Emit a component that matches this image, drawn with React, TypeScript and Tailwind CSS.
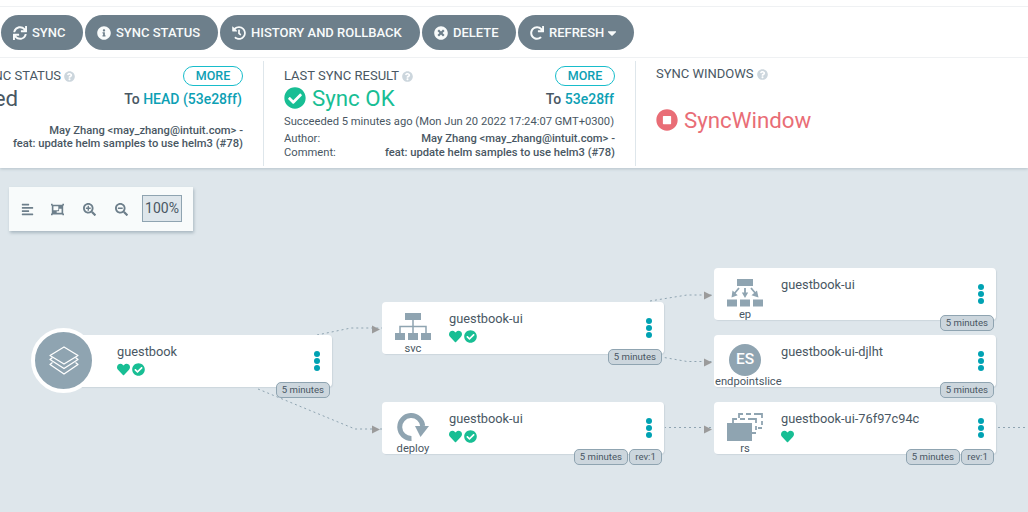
import type { ReactNode } from "react";
import {
  FaAlignLeft,
  FaCaretDown,
  FaCheckCircle,
  FaHeart,
  FaHistory,
  FaInfoCircle,
  FaObjectGroup,
  FaQuestionCircle,
  FaRedo,
  FaSearchMinus,
  FaSearchPlus,
  FaStopCircle,
  FaSync,
  FaTimesCircle,
} from "react-icons/fa";

function ActionButton({ icon, label, width, caret }: { icon: ReactNode; label: string; width: string; caret?: boolean }) {
  return (
    <button
      className={`flex h-[35px] shrink-0 items-center rounded-full bg-[#6d7f8b] pl-[12px] text-[13px] leading-[35px] font-medium whitespace-nowrap text-[#f8fbfb] ${width}`}
    >
      <span className="mr-[5px] text-[14px]">{icon}</span>
      {label}
      {caret && <FaCaretDown className="ml-[1px] text-[14px]" />}
    </button>
  );
}

function PanelTitle({ children }: { children: ReactNode }) {
  return (
    <div className="flex items-center text-[13px] leading-[20px] whitespace-nowrap">
      {children}
      <FaQuestionCircle className="ml-[3px] text-[11px] text-[#ccd6dd]" />
    </div>
  );
}

function MoreButton() {
  return (
    <button className="flex h-5 w-[60px] items-center justify-center rounded-full border border-[#18bdcb] text-[12.5px] font-medium text-[#0da0b4]">
      MORE
    </button>
  );
}

function Revision({ value }: { value: string }) {
  return (
    <div className="mr-px text-[14px] leading-[20px] font-medium whitespace-nowrap">
      To <span className="text-[#0da0b4]">{value}</span>
    </div>
  );
}

function SitemapIcon() {
  return (
    <svg width="36" height="28" viewBox="0 0 36 28" fill="#8fa4b1">
      <path d="M10 0h16v7H10zM0 20h10v7H0zM13 20h10v7H13zM26 20h10v7H26z" />
      <path d="M5 20v-6.5h26V20M18 7v13" fill="none" stroke="#8fa4b1" strokeWidth="1.5" />
    </svg>
  );
}

function EndpointIcon() {
  return (
    <svg width="36" height="28" viewBox="0 0 36 28" fill="#8fa4b1">
      <path d="M10 0h16v7H10zM0 20.5h10v7H0zM13 20.5h10v7H13zM26 20.5h10v7H26z" />
      <path d="M12 9l-5 6M18 9v6M24 9l5 6" fill="none" stroke="#8fa4b1" strokeWidth="1.8" />
      <path d="M4.5 18.5l1-7 5.2 4.8zM14.8 13.5h6.4L18 19zM31.5 18.5l-7-2.2 5.5-4.8z" />
    </svg>
  );
}

function DeployIcon() {
  return (
    <svg width="36" height="28" viewBox="0 0 36 28">
      <path d="M16.500 25.5A11.5 11.5 0 1 1 27.7 13" fill="none" stroke="#8fa4b1" strokeWidth="5" />
      <path d="M20 13h14l-8.5 11z" fill="#8fa4b1" />
    </svg>
  );
}

function ReplicaIcon() {
  return (
    <svg width="36" height="28" viewBox="0 0 36 28" fill="none" stroke="#8fa4b1" strokeWidth="1.8">
      <path d="M12 5V1h4M19 1h5M27 1h8v4M35 8v4M35 15h-4M6 10V6h4M13 6h5M21 6h8v4M29 13v4M29 20h-4" />
      <path d="M0 10h25v18H0z" fill="#8fa4b1" stroke="none" />
    </svg>
  );
}

function SliceIcon() {
  return (
    <div className="flex size-8 items-center justify-center rounded-full bg-[#8fa4b1] text-[15.5px] font-medium text-white">
      ES
    </div>
  );
}

function Badge({ children }: { children: ReactNode }) {
  return (
    <span className="flex h-4 min-w-[33px] items-center justify-center rounded-[5px] border border-[#8fa4b1] bg-[#ccd6dd] px-[5px] text-[9.6px] leading-[14px] whitespace-nowrap text-[#495763]">
      {children}
    </span>
  );
}

type NodeProps = {
  place: string;
  name: string;
  kind?: string;
  icon?: ReactNode;
  healthy?: boolean;
  synced?: boolean;
  rev?: boolean;
  root?: boolean;
};

function ResourceNode({ place, name, kind, icon, healthy, synced, rev, root }: NodeProps) {
  return (
    <div className={`absolute flex h-[52px] w-[282px] rounded-[4px] bg-white shadow-[1px_1px_1px_#ccd6dd] ${place}`}>
      <div className="flex w-[67px] shrink-0">
        {root ? (
          <div className="-mt-[7px] -ml-[19px] flex size-[65px] shrink-0 items-center justify-center rounded-full border-4 border-white bg-[#8fa4b1]">
            <svg width="30" height="29" viewBox="0 0 30 29" fill="none" stroke="white" strokeWidth="1.3" strokeLinejoin="round">
              <path d="M15 1l14 8.5L15 18 1 9.500z" />
              <path d="M3.500 11.500L1 13.500 15 22.500l14-9-2.500-2M3.500 16.500L1 18.500 15 28l14-9.500-2.500-2" />
            </svg>
          </div>
        ) : (
          <div className="ml-px w-[60px] shrink-0 pt-[9px]">
            <div className="flex h-[32px] items-center justify-center">{icon}</div>
            <div className="text-center text-[11.2px] leading-[12px] whitespace-nowrap">{kind}</div>
          </div>
        )}
      </div>
      <div className="flex flex-col pt-[8px]">
        <div className="text-[12.8px] leading-[18px] whitespace-nowrap">{name}</div>
        <div className="mt-[2px] flex gap-[2px] text-[13px] text-[#18be94]">
          {healthy && <FaHeart />}
          {synced && <FaCheckCircle />}
        </div>
      </div>
      <svg className="mt-[16px] mr-[12px] ml-auto" width="6" height="20" viewBox="0 0 6 20" fill="#00a2b3">
        <circle cx="3" cy="3" r="3" />
        <circle cx="3" cy="10" r="3" />
        <circle cx="3" cy="17" r="3" />
      </svg>
      <div className="absolute right-[2px] -bottom-[11px] flex gap-[1px]">
        <Badge>5 minutes</Badge>
        {rev && <Badge>rev:1</Badge>}
      </div>
    </div>
  );
}

export default function App() {
  return (
    <div className="flex h-[512px] w-[1028px] flex-col overflow-hidden bg-[#dee6eb] font-[Roboto,sans-serif] text-[#495763]">
      <header className="relative z-10 shrink-0 bg-white pt-[6px] shadow-[0_1px_3px_#b5c2ca]">
        <div className="flex h-[52px] items-center gap-[2px] border-y border-[#eff1f3] pt-px pl-px">
          <ActionButton icon={<FaSync />} label="SYNC" width="w-[82px]" />
          <ActionButton icon={<FaInfoCircle />} label="SYNC STATUS" width="w-[133px]" />
          <ActionButton icon={<FaHistory />} label="HISTORY AND ROLLBACK" width="w-[200px]" />
          <ActionButton icon={<FaTimesCircle />} label="DELETE" width="w-[94px]" />
          <ActionButton icon={<FaRedo />} label="REFRESH" width="w-[116px]" caret />
        </div>
        <div className="flex h-[110px] pt-[3px] pb-[2px]">
          <section className="flex w-[264px] flex-col border-r border-[#dee6eb] pt-[5px] pr-5">
            <div className="flex items-center justify-between">
              <div className="-ml-[22px]">
                <PanelTitle>SYNC STATUS</PanelTitle>
              </div>
              <MoreButton />
            </div>
            <div className="flex h-[26px] items-center justify-between">
              <div className="-mt-[2px] -ml-[54px] text-[22.3px] leading-[26px]">Synced</div>
              <Revision value="HEAD (53e28ff)" />
            </div>
            <div className="mt-[12px] text-right text-[11.2px] leading-[13px] font-medium whitespace-nowrap">
              May Zhang &lt;may_zhang@intuit.com&gt; -<br />
              feat: update helm samples to use helm3 (#78)
            </div>
          </section>
          <section className="flex w-[372px] flex-col border-r border-[#dee6eb] pt-[5px] pr-5 pl-5">
            <div className="flex items-center justify-between">
              <PanelTitle>LAST SYNC RESULT</PanelTitle>
              <MoreButton />
            </div>
            <div className="flex h-[26px] items-center justify-between">
              <div className="-mt-[2px] flex items-center text-[22.3px] leading-[26px] text-[#18be94]">
                <FaCheckCircle className="mr-[6px] text-[22px]" />
                Sync OK
              </div>
              <Revision value="53e28ff" />
            </div>
            <div className="mt-[3px] text-[11.2px] leading-[14px] whitespace-nowrap">
              Succeeded 5 minutes ago (Mon Jun 20 2022 17:24:07 GMT+0300)
            </div>
            <div className="mt-[3px] flex justify-between text-[11.2px] leading-[14px] whitespace-nowrap">
              <div>
                Author:
                <br />
                Comment:
              </div>
              <div className="text-right font-medium">
                May Zhang &lt;may_zhang@intuit.com&gt; -<br />
                feat: update helm samples to use helm3 (#78)
              </div>
            </div>
          </section>
          <section className="flex flex-col pt-[3px] pl-5">
            <PanelTitle>SYNC WINDOWS</PanelTitle>
            <div className="mt-[23px] flex items-center text-[22.3px] leading-[26px] text-[#e96d76]">
              <FaStopCircle className="mr-[6px] text-[22px]" />
              SyncWindow
            </div>
          </section>
        </div>
      </header>

      <main className="relative flex-1">
        <div className="mt-[19px] ml-[9px] flex h-[44px] w-[184px] items-center bg-[#f8fbfb] pl-[12px] text-[13px] text-[#6d7f8b] shadow-[1px_2px_3px_#a9b8c1]">
          <FaAlignLeft />
          <FaObjectGroup className="ml-[17px]" />
          <FaSearchPlus className="ml-[19px]" />
          <FaSearchMinus className="ml-[19px]" />
          <div className="-mt-px ml-[14px] flex h-[27px] w-[40px] items-center justify-center border border-[#8fa4b1] bg-[#dee6eb] text-[14px] text-[#495763]">
            100%
          </div>
        </div>

        <svg className="absolute inset-0" width="1028" height="344" viewBox="0 168 1028 344" fill="none">
          <g stroke="#8fa4b1" strokeDasharray="2 3">
            <path d="M317 335L351 328H382" />
            <path d="M258 389L355 429H382" />
            <path d="M650 301L687 295H714" />
            <path d="M650 355L687 361.500H714" />
            <path d="M664 427.500H714" />
            <path d="M998 427.500H1028" />
          </g>
          <path
            d="M372 325.500l8 4-8 4zM372 425.500l8 4-8 4zM704 291.500l8 4-8 4zM704 358.500l8 4-8 4zM704 425.500l8 4-8 4z"
            fill="#9b9b9b"
          />
        </svg>

        <ResourceNode place="left-[50px] top-[167px]" name="guestbook" healthy synced root />
        <ResourceNode place="left-[382px] top-[134px]" name="guestbook-ui" kind="svc" icon={<SitemapIcon />} healthy synced />
        <ResourceNode place="left-[382px] top-[234px]" name="guestbook-ui" kind="deploy" icon={<DeployIcon />} healthy synced rev />
        <ResourceNode place="left-[714px] top-[100px]" name="guestbook-ui" kind="ep" icon={<EndpointIcon />} />
        <ResourceNode place="left-[714px] top-[167px]" name="guestbook-ui-djlht" kind="endpointslice" icon={<SliceIcon />} />
        <ResourceNode place="left-[714px] top-[234px]" name="guestbook-ui-76f97c94c" kind="rs" icon={<ReplicaIcon />} healthy rev />
      </main>
    </div>
  );
}
